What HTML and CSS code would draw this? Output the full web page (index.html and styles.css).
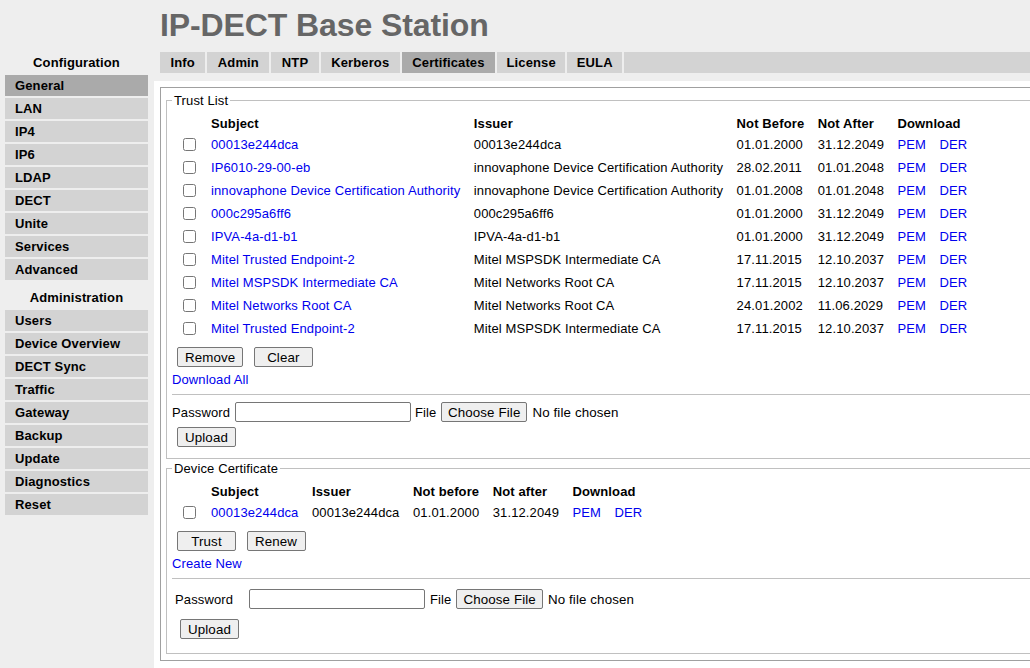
FILE: index.html
```html
<!DOCTYPE html>
<html>
<head>
<meta charset="utf-8">
<title>IP-DECT Base Station</title>
<link rel="stylesheet" href="styles.css">
</head>
<body>
<div class="page">
  <header class="top">
    <h1 class="title">IP-DECT Base Station</h1>
  </header>
  <div class="cols">
    <nav class="side">
      <div class="side-head">Configuration</div>
      <div class="side-item active">General</div>
      <div class="side-item">LAN</div>
      <div class="side-item">IP4</div>
      <div class="side-item">IP6</div>
      <div class="side-item">LDAP</div>
      <div class="side-item">DECT</div>
      <div class="side-item">Unite</div>
      <div class="side-item">Services</div>
      <div class="side-item">Advanced</div>
      <div class="side-head side-head-2">Administration</div>
      <div class="side-item">Users</div>
      <div class="side-item">Device Overview</div>
      <div class="side-item">DECT Sync</div>
      <div class="side-item">Traffic</div>
      <div class="side-item">Gateway</div>
      <div class="side-item">Backup</div>
      <div class="side-item">Update</div>
      <div class="side-item">Diagnostics</div>
      <div class="side-item">Reset</div>
    </nav>
    <main class="main">
      <div class="tabs">
        <div class="tab">Info</div>
        <div class="tab">Admin</div>
        <div class="tab">NTP</div>
        <div class="tab">Kerberos</div>
        <div class="tab active">Certificates</div>
        <div class="tab tab-tight">License</div>
        <div class="tab tab-tight">EULA</div>
        <div class="tab-fill"></div>
      </div>
      <div class="content">
        <div class="box">
          <fieldset class="fs">
            <legend>Trust List</legend>
            <table class="certs">
              <tr class="hrow"><th class="cb"></th><th>Subject</th><th>Issuer</th><th>Not Before</th><th>Not After</th><th colspan="2">Download</th></tr>
              <tr><td class="cb"><input type="checkbox"></td><td><a class="lnk" href="#">00013e244dca</a></td><td>00013e244dca</td><td>01.01.2000</td><td>31.12.2049</td><td><a class="lnk" href="#">PEM</a></td><td><a class="lnk" href="#">DER</a></td></tr>
              <tr><td class="cb"><input type="checkbox"></td><td><a class="lnk" href="#">IP6010-29-00-eb</a></td><td>innovaphone Device Certification Authority</td><td>28.02.2011</td><td>01.01.2048</td><td><a class="lnk" href="#">PEM</a></td><td><a class="lnk" href="#">DER</a></td></tr>
              <tr><td class="cb"><input type="checkbox"></td><td><a class="lnk" href="#">innovaphone Device Certification Authority</a></td><td>innovaphone Device Certification Authority</td><td>01.01.2008</td><td>01.01.2048</td><td><a class="lnk" href="#">PEM</a></td><td><a class="lnk" href="#">DER</a></td></tr>
              <tr><td class="cb"><input type="checkbox"></td><td><a class="lnk" href="#">000c295a6ff6</a></td><td>000c295a6ff6</td><td>01.01.2000</td><td>31.12.2049</td><td><a class="lnk" href="#">PEM</a></td><td><a class="lnk" href="#">DER</a></td></tr>
              <tr><td class="cb"><input type="checkbox"></td><td><a class="lnk" href="#">IPVA-4a-d1-b1</a></td><td>IPVA-4a-d1-b1</td><td>01.01.2000</td><td>31.12.2049</td><td><a class="lnk" href="#">PEM</a></td><td><a class="lnk" href="#">DER</a></td></tr>
              <tr><td class="cb"><input type="checkbox"></td><td><a class="lnk" href="#">Mitel Trusted Endpoint-2</a></td><td>Mitel MSPSDK Intermediate CA</td><td>17.11.2015</td><td>12.10.2037</td><td><a class="lnk" href="#">PEM</a></td><td><a class="lnk" href="#">DER</a></td></tr>
              <tr><td class="cb"><input type="checkbox"></td><td><a class="lnk" href="#">Mitel MSPSDK Intermediate CA</a></td><td>Mitel Networks Root CA</td><td>17.11.2015</td><td>12.10.2037</td><td><a class="lnk" href="#">PEM</a></td><td><a class="lnk" href="#">DER</a></td></tr>
              <tr><td class="cb"><input type="checkbox"></td><td><a class="lnk" href="#">Mitel Networks Root CA</a></td><td>Mitel Networks Root CA</td><td>24.01.2002</td><td>11.06.2029</td><td><a class="lnk" href="#">PEM</a></td><td><a class="lnk" href="#">DER</a></td></tr>
              <tr><td class="cb"><input type="checkbox"></td><td><a class="lnk" href="#">Mitel Trusted Endpoint-2</a></td><td>Mitel MSPSDK Intermediate CA</td><td>17.11.2015</td><td>12.10.2037</td><td><a class="lnk" href="#">PEM</a></td><td><a class="lnk" href="#">DER</a></td></tr>
            </table>
            <div class="actions">
              <button class="btn" type="button">Remove</button>
              <button class="btn" type="button">Clear</button>
            </div>
            <div class="linkline"><a class="lnk" href="#">Download All</a></div>
            <div class="sep"></div>
            <div class="pwrow">
              <span>Password</span>
              <input class="txt" type="password">
              <span>File</span>
              <input class="file" type="file">
            </div>
            <div class="uprow"><button class="btn" type="button">Upload</button></div>
          </fieldset>
          <fieldset class="fs fs-2">
            <legend>Device Certificate</legend>
            <table class="certs">
              <tr class="hrow"><th class="cb"></th><th>Subject</th><th>Issuer</th><th>Not before</th><th>Not after</th><th colspan="2">Download</th></tr>
              <tr><td class="cb"><input type="checkbox"></td><td><a class="lnk" href="#">00013e244dca</a></td><td>00013e244dca</td><td>01.01.2000</td><td>31.12.2049</td><td><a class="lnk" href="#">PEM</a></td><td><a class="lnk" href="#">DER</a></td></tr>
            </table>
            <div class="actions">
              <button class="btn" type="button">Trust</button>
              <button class="btn" type="button">Renew</button>
            </div>
            <div class="linkline"><a class="lnk" href="#">Create New</a></div>
            <div class="sep"></div>
            <table class="pwtable">
              <tr>
                <td class="lbl">Password</td>
                <td>
                  <div class="pwrow pwrow-2">
                    <input class="txt" type="password">
                    <span>File</span>
                    <input class="file" type="file">
                  </div>
                </td>
              </tr>
              <tr>
                <td colspan="2"><button class="btn btn-up2" type="button">Upload</button></td>
              </tr>
            </table>
          </fieldset>
        </div>
      </div>
    </main>
  </div>
</div>
</body>
</html>
```

FILE: styles.css
```css
html, body {
  margin: 0;
  padding: 0;
  overflow: hidden;
}

body {
  font-family: "Liberation Sans", Arial, sans-serif;
  font-size: 13px;
  letter-spacing: 0.12px;
  color: #000;
  background: #eeeeee;
}

.page {
  width: 1060px;
  height: 668px;
  display: flex;
  flex-direction: column;
  background: #eeeeee;
}

.top {
  height: 52px;
  flex: none;
  box-sizing: border-box;
  padding: 6px 0 0 160px;
}

.title {
  margin: 0;
  font-size: 32px;
  line-height: 38px;
  font-weight: bold;
  letter-spacing: -0.1px;
  color: #666666;
}

.cols {
  flex: 1;
  display: flex;
  min-height: 0;
}

.side {
  width: 154px;
  flex: none;
  box-sizing: border-box;
  padding: 0 6px 0 5px;
  display: flex;
  flex-direction: column;
  gap: 2px;
}

.side-head {
  height: 21px;
  line-height: 21px;
  text-align: center;
  font-weight: bold;
}

.side-head-2 {
  margin-top: 5px;
}

.side-item {
  height: 21px;
  line-height: 21px;
  padding-left: 10px;
  background: #d3d3d3;
  font-weight: bold;
}

.side-item.active {
  background: #aaaaaa;
}

.main {
  flex: 1;
  display: flex;
  flex-direction: column;
  min-width: 0;
}

.tabs {
  display: flex;
  gap: 2px;
  height: 21px;
  margin: 0 0 8px 6px;
}

.tab {
  padding: 0 10.5px;
  line-height: 21px;
  background: #d3d3d3;
  font-weight: bold;
}

.tab-tight {
  padding: 0 9.5px;
}

.tab.active {
  background: #aaaaaa;
}

.tab-fill {
  flex: 1;
  background: #d3d3d3;
}

.content {
  flex: 1;
  background: #ffffff;
  padding: 6px 0 0 6px;
}

.box {
  border: 1px solid #a0a0a0;
  padding: 5px 5px 6px 5px;
}

.fs {
  margin: 0;
  border: 1px solid #c0c0c0;
  padding: 5px 0 11px 5px;
  min-width: 0;
}

.fs-2 {
  margin-top: 2px;
}

.fs legend {
  padding: 0 2px;
  line-height: 15px;
}

.certs {
  border-collapse: collapse;
  border-spacing: 0;
}

.certs th,
.certs td {
  padding: 0 13.5px 0 0;
  text-align: left;
  white-space: nowrap;
  vertical-align: middle;
}

.certs th {
  font-weight: bold;
  height: 20px;
}

.certs td {
  height: 23px;
}

.certs .cb {
  padding: 0 12px 0 7px;
}

.certs input[type="checkbox"] {
  margin: 3px 3px 3px 4px;
  width: 13px;
  height: 13px;
  display: block;
}

.lnk {
  color: #0000ee;
  text-decoration: none;
}

.actions {
  display: flex;
  gap: 10.5px;
  margin-top: 7px;
  padding-left: 5px;
}

.btn {
  box-sizing: border-box;
  height: 20px;
  min-width: 59px;
  padding: 0 7px;
  font-family: "Liberation Sans", Arial, sans-serif;
  font-size: 13.33px;
  letter-spacing: 0.12px;
  color: #000;
  background: #efefef;
  border: 1px solid #767676;
  border-radius: 2px;
  margin: 0;
}

.linkline {
  margin-top: 5px;
  line-height: 15px;
}

.sep {
  margin-top: 7px;
  border-top: 1px solid #c0c0c0;
}

.pwrow {
  display: flex;
  align-items: center;
  gap: 4.5px;
  height: 20px;
  margin-top: 7px;
}

.pwrow-2 {
  margin-top: 0;
  gap: 5px;
}

.txt {
  box-sizing: border-box;
  width: 176px;
  height: 20px;
  margin: 0;
  padding: 1px 2px;
  border: 1px solid #767676;
  border-radius: 2px;
  background: #fff;
  font-family: "Liberation Sans", Arial, sans-serif;
  font-size: 13.33px;
}

.file {
  margin: 0;
  font-family: "Liberation Sans", Arial, sans-serif;
  font-size: 13.33px;
  letter-spacing: 0.12px;
  color: #000;
}

.file::file-selector-button {
  box-sizing: border-box;
  height: 20px;
  padding: 0 6px;
  margin: 0 5px 0 0;
  font-family: "Liberation Sans", Arial, sans-serif;
  font-size: 13.33px;
  letter-spacing: 0.12px;
  color: #000;
  background: #efefef;
  border: 1px solid #767676;
  border-radius: 2px;
}

.uprow {
  margin-top: 5px;
  padding-left: 5px;
}

.pwtable {
  border-collapse: collapse;
  border-spacing: 0;
  margin-top: 7px;
}

.pwtable td {
  padding: 3px;
  vertical-align: middle;
  white-space: nowrap;
}

.pwtable td.lbl {
  width: 68px;
}

.btn-up2 {
  margin: 4px 0 0 5px;
}
```
